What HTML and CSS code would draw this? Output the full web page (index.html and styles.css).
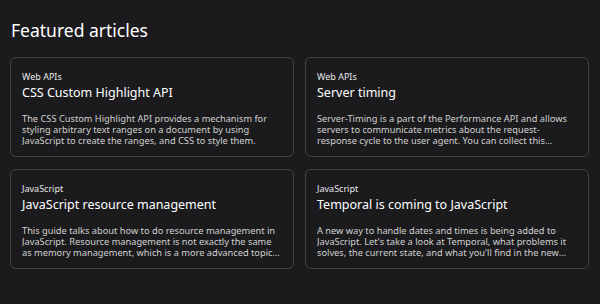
FILE: index.html
```html
<!DOCTYPE html>
<html lang="en">
<head>
    <meta charset="UTF-8">
    <meta name="viewport" content="width=device-width, initial-scale=1.0">
    <title>Featured articles</title>
    <link rel="stylesheet" href="styles.css">
</head>
<body>
    <section class="featured">
        <h2>Featured articles</h2>

        <div class="article-grid">
            <div class="article-card">
                <span class="tag">Web APIs</span>
                <h3>CSS Custom Highlight API</h3>
                <p>The CSS Custom Highlight API provides a mechanism for styling arbitrary text ranges on a document by using JavaScript to create the ranges, and CSS to style them.</p>
            </div>

            <div class="article-card">
                <span class="tag">Web APIs</span>
                <h3>Server timing</h3>
                <p>Server-Timing is a part of the Performance API and allows servers to communicate metrics about the request-response cycle to the user agent. You can collect this information and act on server-side metrics in the same way as all other metrics.</p>
            </div>

            <div class="article-card">
                <span class="tag">JavaScript</span>
                <h3>JavaScript resource management</h3>
                <p>This guide talks about how to do resource management in JavaScript. Resource management is not exactly the same as memory management, which is a more advanced topic and usually handled by JavaScript automatically.</p>
            </div>

            <div class="article-card">
                <span class="tag">JavaScript</span>
                <h3>Temporal is coming to JavaScript</h3>
                <p>A new way to handle dates and times is being added to JavaScript. Let's take a look at Temporal, what problems it solves, the current state, and what you'll find in the new documentation about it on MDN.</p>
            </div>
        </div>
    </section>
</body>
</html>
```

FILE: styles.css
```css
body {
    font-family: "Noto Sans", "Open Sans", sans-serif;
    margin: 0;
    padding: 0 11px 0 10px;
    background-color: #1b1b1d;
    color: #fff;
}
.featured h2 {
    font-size: 17.5px;
    font-weight: 400;
    margin: 0;
    padding: 17px 1px 14px;
    line-height: 26px;
}
.article-grid {
    display: grid;
    grid-template-columns: 1fr 1fr;
    gap: 12px 11px;
}
.article-card {
    border: 1px solid #434347;
    border-radius: 6px;
    padding: 12px 11px 10px;
    height: 100px;
    box-sizing: border-box;
}
.tag {
    display: block;
    font-size: 9px;
    line-height: 13px;
    color: #e8e8e8;
}
h3 {
    font-size: 12.5px;
    font-weight: 400;
    line-height: 18px;
    margin: 1px 0 11px;
}
p {
    font-size: 9.25px;
    line-height: 11px;
    margin: 0;
    color: #d0d0d0;
    display: -webkit-box;
    -webkit-line-clamp: 3;
    -webkit-box-orient: vertical;
    overflow: hidden;
}
```
